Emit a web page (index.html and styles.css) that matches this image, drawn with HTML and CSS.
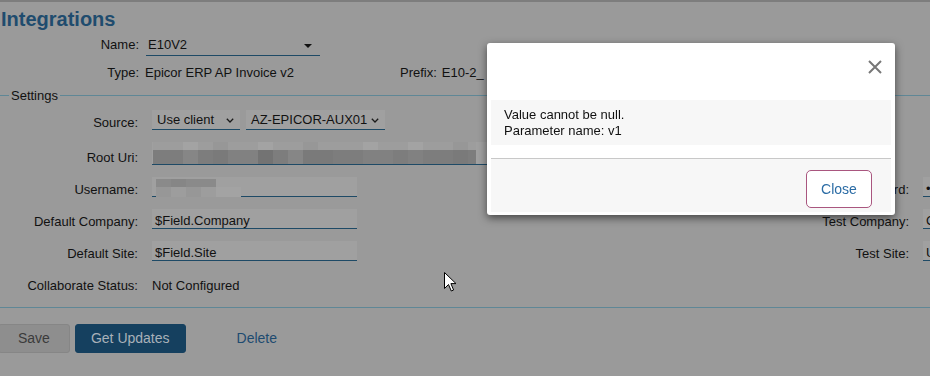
FILE: index.html
```html
<!DOCTYPE html>
<html>
<head>
<meta charset="utf-8">
<title>Integrations</title>
<link rel="stylesheet" href="styles.css">
</head>
<body>
<div class="page">
  <h1 class="title">Integrations</h1>
  <div class="head">
    <div class="head-row">
      <span class="head-lbl">Name:</span>
      <div class="name-select">E10V2<span class="caret"></span></div>
    </div>
    <div class="head-row type-row">
      <span class="head-lbl">Type:</span>
      <span class="type-val">Epicor ERP AP Invoice v2</span>
      <span class="prefix-lbl">Prefix:</span>
      <span class="prefix-val">E10-2_</span>
    </div>
  </div>

  <fieldset class="settings">
    <legend>Settings</legend>
    <div class="grid">
      <span class="lbl">Source:</span>
      <div class="selects">
        <div class="sel sel-client">Use client<svg class="chev" width="8" height="5" viewBox="0 0 8 5"><polyline points="0.8,0.8 4,4 7.2,0.8" fill="none" stroke="#1a1a1a" stroke-width="1.3"/></svg></div>
        <div class="sel sel-server">AZ-EPICOR-AUX01<svg class="chev" width="8" height="5" viewBox="0 0 8 5"><polyline points="0.8,0.8 4,4 7.2,0.8" fill="none" stroke="#1a1a1a" stroke-width="1.3"/></svg></div>
      </div>
      <span class="gap-cell"></span><span class="gap-cell"></span>

      <span class="lbl">Root Uri:</span>
      <div class="field field-uri">
        <div class="pix">
          <div class="pix-row top">
            <i class="t2"></i><i class="t2"></i><i class="t3"></i><i class="t2"></i><i class="t1"></i><i class="t2"></i><i class="t2"></i><i class="t3"></i><i class="t2"></i><i class="t2"></i><i class="t1"></i><i class="t2"></i><i class="t2"></i><i class="t2"></i><i class="t3"></i><i class="t2"></i><i class="t2"></i><i class="t3"></i><i class="t2"></i><i class="t2"></i><i class="t1"></i><i class="t2"></i>
          </div>
          <div class="pix-row bottom">
            <i class="s3"></i><i class="s3"></i><i class="s5"></i><i class="s3"></i><i class="s2"></i><i class="s4"></i><i class="s4"></i><i class="s1"></i><i class="s3"></i><i class="s5"></i><i class="s2"></i><i class="s2"></i><i class="s3"></i><i class="s3"></i><i class="s4"></i><i class="s4"></i><i class="s3"></i><i class="s4"></i><i class="s3"></i><i class="s3"></i><i class="s2"></i><i class="s3"></i>
          </div>
        </div>
      </div>
      <span class="gap-cell"></span><span class="gap-cell"></span>

      <span class="lbl">Username:</span>
      <div class="field field-user">
        <div class="pix-row utop"><i class="s6"></i><i class="s5"></i><i class="s6"></i><i class="s6"></i></div>
        <div class="pix-row ubottom"><i class="t1"></i><i class="t2"></i><i class="t1"></i><i class="t2"></i><i class="t3 wide"></i></div>
      </div>
      <span class="gap-cell"></span>
      <span class="lbl">Password:</span>
      <div class="field field-right">&#8226;&#8226;&#8226;&#8226;&#8226;&#8226;</div>

      <span class="lbl">Default Company:</span>
      <div class="field">$Field.Company</div>
      <span class="gap-cell"></span>
      <span class="lbl">Test Company:</span>
      <div class="field field-right">CO1</div>

      <span class="lbl">Default Site:</span>
      <div class="field">$Field.Site</div>
      <span class="gap-cell"></span>
      <span class="lbl">Test Site:</span>
      <div class="field field-right">US</div>

      <span class="lbl">Collaborate Status:</span>
      <span class="status">Not Configured</span>
    </div>
  </fieldset>

  <div class="actions">
    <button class="btn btn-save">Save</button>
    <button class="btn btn-primary">Get Updates</button>
    <button class="btn btn-link">Delete</button>
  </div>
</div>

<div class="modal">
  <div class="modal-head">
    <svg class="close-x" width="14" height="14" viewBox="0 0 14 14"><path d="M1 1 L13 13 M13 1 L1 13" stroke="#777" stroke-width="2" fill="none"/></svg>
  </div>
  <div class="modal-body">Value cannot be null.<br>Parameter name: v1</div>
  <div class="modal-foot">
    <button class="btn-close">Close</button>
  </div>
</div>

<svg class="cursor" width="13" height="21" viewBox="0 0 13 21"><path d="M0.5 0.5 L0.5 16.5 L4.5 12.5 L7.3 19 L9.6 18 L6.9 11.6 L12 11.6 Z" fill="#fff" stroke="#000" stroke-width="1"/></svg>
</body>
</html>
```
FILE: styles.css
```css
html, body {
  margin: 0;
  padding: 0;
  background: #9a9a9a;
  overflow: hidden;
}
body {
  width: 930px;
  height: 376px;
  font-family: "Liberation Sans", Arial, sans-serif;
  font-size: 13px;
  color: #111;
}
.page {
  border-top: 2px solid #7d7d7d;
}
.title {
  margin: 5px 0 0 1px;
  font-size: 20px;
  line-height: 24px;
  font-weight: bold;
  color: #1f4c6e;
}
.head {
  margin-top: 3px;
}
.head-row {
  display: flex;
  align-items: baseline;
  height: 22px;
  line-height: 22px;
}
.type-row {
  margin-top: 6px;
}
.head-lbl {
  width: 139px;
  text-align: right;
  margin-right: 7px;
  flex: none;
}
.type-row .head-lbl {
  margin-right: 6px;
}
.name-select {
  position: relative;
  width: 174px;
  height: 22px;
  box-sizing: border-box;
  border-bottom: 1px solid #1e4a66;
  padding-left: 2px;
  line-height: 22px;
}
.caret {
  position: absolute;
  right: 8px;
  top: 10px;
  width: 0;
  height: 0;
  border-left: 4px solid transparent;
  border-right: 4px solid transparent;
  border-top: 4px solid #111;
}
.type-val {
  width: 255px;
  flex: none;
}
.prefix-lbl {
  margin-right: 5px;
}

.settings {
  margin: 4px 0 0 -4px;
  width: 1114px;
  border: 1px solid #5f8796;
  padding: 7px 12px 14px;
  min-width: 0;
}
.settings legend {
  padding: 0 2px;
  line-height: 15px;
  font-size: 13px;
}
.grid {
  display: grid;
  grid-template-columns: 129px 205px 404px 120px 200px;
  grid-template-rows: 20px 23px 20px 20px 20px 20px;
  column-gap: 14px;
  row-gap: 12px;
}
.lbl {
  align-self: end;
  text-align: right;
  line-height: 15px;
  white-space: nowrap;
}
.status {
  align-self: end;
  line-height: 15px;
  white-space: nowrap;
}
.selects {
  grid-column: 2 / 4;
  display: flex;
  gap: 6px;
  align-self: end;
}
.sel {
  display: flex;
  align-items: center;
  justify-content: space-between;
  box-sizing: border-box;
  height: 20px;
  line-height: 19px;
  padding: 0 6px 0 5px;
  background: #a0a0a0;
  border-bottom: 1px solid #1e4a66;
}
.sel-client { width: 88px; }
.sel-server { width: 139px; }
.chev {
  flex: none;
  margin-top: 2px;
}
.field {
  box-sizing: border-box;
  height: 20px;
  padding: 5px 3px 0;
  line-height: 14px;
  background: #a0a0a0;
  border-bottom: 1px solid #1e4a66;
  white-space: nowrap;
  overflow: visible;
}
.field-right {
  padding-left: 3px;
}
.field-uri {
  grid-column: 2 / 4;
  height: 23px;
  padding: 0 0 0 1px;
}
.pix {
  width: 323px;
  overflow: hidden;
}
.pix-row {
  display: flex;
}
.pix-row i {
  display: block;
  flex: none;
  width: 15px;
}
.pix-row.top i { height: 8px; }
.pix-row.bottom i { height: 14px; }
.field-user {
  padding: 2px 0 0 4px;
}
.pix-row.utop i { height: 8px; }
.pix-row.ubottom i { height: 10px; }
.pix-row i.wide { width: 25px; }
.s1 { background: #737373; }
.s2 { background: #7a7a7a; }
.s3 { background: #7d7d7d; }
.s4 { background: #818181; }
.s5 { background: #868686; }
.s6 { background: #8a8a8a; }
.t1 { background: #979797; }
.t2 { background: #9d9d9d; }
.t3 { background: #a3a3a3; }

.actions {
  display: flex;
  margin: 16px 0 0 -2px;
  gap: 5px;
}
.btn {
  font-family: "Liberation Sans", Arial, sans-serif;
  font-size: 14px;
  height: 29px;
  line-height: 27px;
  padding: 0 19px;
  border: 1px solid transparent;
  border-radius: 3px;
  margin: 0;
}
.btn-save {
  background: #8e8e8e;
  border-color: #868686;
  color: #3b3b3b;
}
.btn-primary {
  background: #15405f;
  border-color: #15405f;
  color: #a9b1b9;
  padding: 0 15px;
}
.btn-link {
  background: none;
  color: #1e4b70;
  margin-left: 26px;
}

.modal {
  position: fixed;
  left: 487px;
  top: 43px;
  width: 408px;
  box-sizing: border-box;
  padding: 4px 4px 3px;
  background: #fff;
  border-radius: 3px;
  box-shadow: 0 3px 9px rgba(0, 0, 0, 0.55);
}
.modal-head {
  height: 53px;
  box-sizing: border-box;
  display: flex;
  justify-content: flex-end;
  align-items: flex-start;
  padding: 13px 9px 0 0;
}
.close-x {
  display: block;
}
.modal-body {
  background: #f7f7f7;
  padding: 7px 13px 6px;
  line-height: 16px;
  font-size: 13px;
  color: #111;
}
.modal-foot {
  margin-top: 13px;
  border-top: 1px solid #c8c8c8;
  background: #f7f7f7;
  height: 54px;
  box-sizing: border-box;
  display: flex;
  justify-content: flex-end;
  align-items: flex-start;
  padding: 11px 19px 0 0;
}
.btn-close {
  width: 66px;
  height: 38px;
  background: #fff;
  border: 1px solid #a9567f;
  border-radius: 5px;
  font-family: "Liberation Sans", Arial, sans-serif;
  font-size: 14px;
  color: #2b6ca5;
  padding: 0;
}
.cursor {
  position: fixed;
  left: 444px;
  top: 272px;
}
```
